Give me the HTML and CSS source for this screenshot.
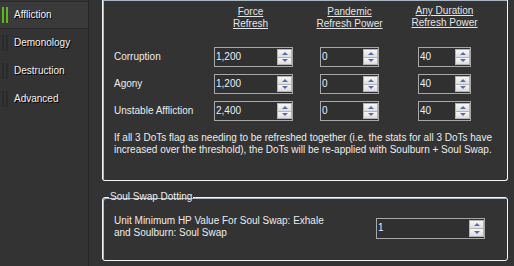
FILE: index.html
```html
<!DOCTYPE html>
<html>
<head>
<meta charset="utf-8">
<link rel="stylesheet" href="styles.css">
</head>
<body>
<div class="app">
  <nav class="sidebar">
    <div class="nav-item active"><span class="bars"><i></i><i></i></span>Affliction</div>
    <div class="nav-item"><span class="bars"><i></i><i></i></span>Demonology</div>
    <div class="nav-item"><span class="bars"><i></i><i></i></span>Destruction</div>
    <div class="nav-item"><span class="bars"><i></i><i></i></span>Advanced</div>
  </nav>
  <main class="content">
    <section class="group group-top">
      <div class="grid">
        <div class="corner"></div>
        <div class="head c-force">Force<br>Refresh</div>
        <div class="head c-pand">Pandemic<br>Refresh Power</div>
        <div class="head c-any head-up">Any Duration<br>Refresh Power</div>

        <div class="label">Corruption</div>
        <div class="spin c-force w-force"><span class="val">1,200</span><span class="btns"><b class="up"></b><b class="down"></b></span></div>
        <div class="spin c-pand w-pand"><span class="val">0</span><span class="btns"><b class="up"></b><b class="down"></b></span></div>
        <div class="spin c-any w-any"><span class="val">40</span><span class="btns"><b class="up"></b><b class="down"></b></span></div>

        <div class="label">Agony</div>
        <div class="spin c-force w-force"><span class="val">1,200</span><span class="btns"><b class="up"></b><b class="down"></b></span></div>
        <div class="spin c-pand w-pand"><span class="val">0</span><span class="btns"><b class="up"></b><b class="down"></b></span></div>
        <div class="spin c-any w-any"><span class="val">40</span><span class="btns"><b class="up"></b><b class="down"></b></span></div>

        <div class="label">Unstable Affliction</div>
        <div class="spin c-force w-force"><span class="val">2,400</span><span class="btns"><b class="up"></b><b class="down"></b></span></div>
        <div class="spin c-pand w-pand"><span class="val">0</span><span class="btns"><b class="up"></b><b class="down"></b></span></div>
        <div class="spin c-any w-any"><span class="val">40</span><span class="btns"><b class="up"></b><b class="down"></b></span></div>
      </div>
      <p class="note">If all 3 DoTs flag as needing to be refreshed together (i.e. the stats for all 3 DoTs have increased over the threshold), the DoTs will be re-applied with Soulburn + Soul Swap.</p>
    </section>

    <fieldset class="group group-swap">
      <legend>Soul Swap Dotting</legend>
      <div class="swap-row">
        <div class="swap-label">Unit Minimum HP Value For Soul Swap: Exhale<br>and Soulburn: Soul Swap</div>
        <div class="spin w-hp"><span class="val">1</span><span class="btns"><b class="up"></b><b class="down"></b></span></div>
      </div>
    </fieldset>
  </main>
</div>
</body>
</html>
```

FILE: styles.css
```css
html, body {
  margin: 0;
  padding: 0;
}
body {
  background: #333333;
  font-family: "Liberation Sans", Arial, sans-serif;
  font-size: 10px;
  line-height: 12px;
  color: #ececec;
  width: 514px;
  height: 266px;
  overflow: hidden;
}
.app {
  display: flex;
  height: 266px;
}
.sidebar {
  width: 88px;
  flex: 0 0 88px;
  padding-top: 1px;
  border-right: 1px solid #262626;
  background: #333333;
}
.nav-item {
  height: 28px;
  box-sizing: border-box;
  display: flex;
  align-items: center;
  padding-left: 2px;
  color: #f2f2f2;
  text-shadow: 1px 1px 0 #000;
}
.nav-item.active {
  background: #3a3a3a;
  border-top: 1px solid #2a2a2a;
  border-bottom: 1px solid #2a2a2a;
}
.bars {
  display: flex;
  gap: 2px;
  margin-right: 6px;
}
.bars i {
  display: block;
  width: 2px;
  height: 16px;
  background: #2a2a2a;
}
.active .bars i {
  background: #5db81a;
}
.content {
  flex: 1;
  display: flex;
  flex-direction: column;
  padding: 0 6px 0 13px;
}
.group {
  border: 1px solid #f4f6f9;
  box-shadow: inset 1px 1px 0 #aab6c4;
  border-radius: 3px;
}
.group-top {
  border-top: none;
  border-radius: 0 0 3px 3px;
  padding: 6px 0 0 11px;
  height: 181px;
  box-sizing: border-box;
}
.grid {
  display: grid;
  grid-template-columns: 100px 79px 27px 59px 39px 53px;
  grid-template-rows: auto 20px 20px 20px;
  row-gap: 7px;
  align-items: center;
}
.label {
  grid-column: 1;
}
.c-force { grid-column: 2; }
.c-pand { grid-column: 4; }
.c-any { grid-column: 6; }
.head {
  grid-row: 1;
  justify-self: center;
  width: max-content;
  text-align: center;
  text-decoration: underline;
  color: #e4e4e4;
  margin-bottom: 10px;
}
.head.c-force {
  margin-right: 6px;
}
.head-up {
  position: relative;
  top: -1px;
}
.note {
  margin: 11px 0 0;
  width: 384px;
}
.spin {
  display: flex;
  box-sizing: border-box;
  height: 20px;
  border: 1px solid #a8a8a8;
  background: #303030;
}
.w-force { width: 79px; }
.w-pand { width: 59px; }
.w-any { width: 53px; }
.w-hp { width: 109px; height: 21px; }
.val {
  flex: 1;
  padding-left: 1px;
  color: #e6eeff;
  line-height: 18px;
}
.btns {
  width: 15px;
  display: flex;
  flex-direction: column;
  margin: 1px 0;
}
.btns b {
  flex: 1;
  display: flex;
  align-items: center;
  justify-content: center;
  background: linear-gradient(#f6f6f6, #dedede);
  border: 1px solid #b4b4b4;
}
.btns b + b {
  border-top: none;
}
.btns b.up::after {
  content: "";
  border-left: 3px solid transparent;
  border-right: 3px solid transparent;
  border-bottom: 3px solid #566ca8;
}
.btns b.down::after {
  content: "";
  border-left: 3px solid transparent;
  border-right: 3px solid transparent;
  border-top: 3px solid #566ca8;
}
.group-swap {
  margin: 10px 0 0;
  padding: 0 0 0 11px;
  min-width: 0;
}
.group-swap legend {
  padding: 0 1px;
  margin-left: -5px;
  color: #ececec;
}
.swap-row {
  display: flex;
  align-items: flex-start;
  padding: 13px 0 21px;
}
.swap-label {
  flex: 0 0 262px;
  margin-top: -1px;
}
.w-hp {
  margin-top: 2px;
}
```
